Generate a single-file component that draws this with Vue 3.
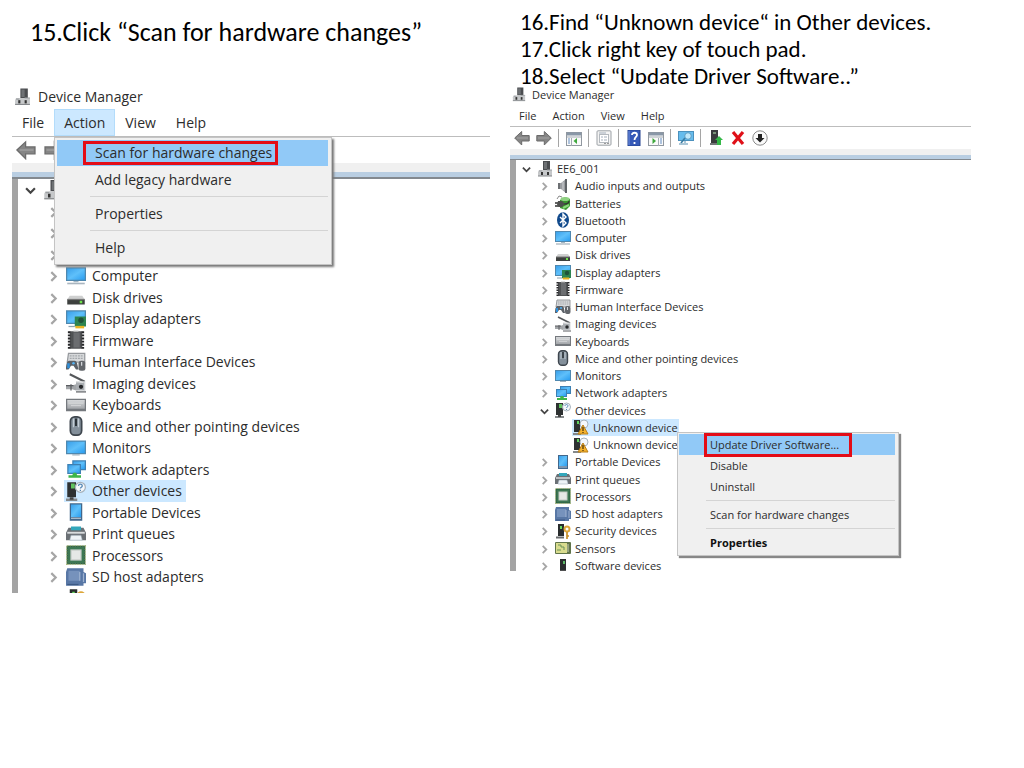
<script setup>
import { ref } from 'vue'

const categories = [
  ['audio', 'Audio inputs and outputs'],
  ['battery', 'Batteries'],
  ['bluetooth', 'Bluetooth'],
  ['computer', 'Computer'],
  ['disk', 'Disk drives'],
  ['display', 'Display adapters'],
  ['firmware', 'Firmware'],
  ['hid', 'Human Interface Devices'],
  ['imaging', 'Imaging devices'],
  ['keyboard', 'Keyboards'],
  ['mouse', 'Mice and other pointing devices'],
  ['monitor', 'Monitors'],
  ['network', 'Network adapters'],
  ['other', 'Other devices'],
  ['portable', 'Portable Devices'],
  ['printer', 'Print queues'],
  ['cpu', 'Processors'],
  ['sd', 'SD host adapters'],
  ['security', 'Security devices'],
  ['sensor', 'Sensors'],
  ['software', 'Software devices']
].map(([icon, label]) => ({ icon, label, level: 1 }))

const root = { icon: 'pc', label: 'EE6_001', level: 0, open: true }

const scanRows = [
  root,
  ...categories.slice(0, 19).map((c) => ({ ...c, selected: c.icon === 'other' }))
]

const updateRows = [root]
for (const c of categories) {
  const open = c.icon === 'other'
  updateRows.push({ ...c, open })
  if (open) {
    updateRows.push({ icon: 'unknown', label: 'Unknown device', level: 2, selected: true })
    updateRows.push({ icon: 'unknown', label: 'Unknown device', level: 2 })
  }
}

const panels = ref([
  {
    id: 'scan',
    steps: ['15.Click “Scan for hardware changes”'],
    activeMenu: 'Action',
    tools: [['back', 'Back'], ['forward', 'Forward']],
    rows: scanRows,
    menu: [
      { label: 'Scan for hardware changes', marked: true },
      { label: 'Add legacy hardware' },
      null,
      { label: 'Properties' },
      null,
      { label: 'Help' }
    ]
  },
  {
    id: 'update',
    steps: [
      '16.Find “Unknown device“ in Other devices.',
      '17.Click right key of touch pad.',
      '18.Select “Update Driver Software..”'
    ],
    activeMenu: '',
    tools: [
      ['back', 'Back'], ['forward', 'Forward'], null,
      ['tree', 'Show or hide console tree'], null,
      ['props', 'Properties'], null,
      ['help', 'Help'], ['action', 'Show or hide action pane'], null,
      ['scan', 'Scan for hardware changes'], null,
      ['update', 'Update driver'], ['remove', 'Uninstall'], ['down', 'Disable']
    ],
    rows: updateRows,
    menu: [
      { label: 'Update Driver Software...', marked: true },
      { label: 'Disable' },
      { label: 'Uninstall' },
      null,
      { label: 'Scan for hardware changes' },
      null,
      { label: 'Properties', bold: true }
    ]
  }
])

const menuNames = ['File', 'Action', 'View', 'Help']
</script>

<template>
  <svg class="sprite" aria-hidden="true">
    <defs>
      <linearGradient id="g-blue" x1="0" y1="0" x2="1" y2="1">
        <stop offset="0" stop-color="#3aa0ea" /><stop offset=".5" stop-color="#5fc0fa" /><stop offset="1" stop-color="#2a9df0" />
      </linearGradient>
      <linearGradient id="g-gray" x1="0" y1="0" x2="0" y2="1">
        <stop offset="0" stop-color="#d6d8da" /><stop offset="1" stop-color="#a3a6aa" />
      </linearGradient>
    </defs>
    <symbol id="pc" viewBox="0 0 16 16">
      <rect x="6" y="0" width="7" height="9" fill="#4b4d50" /><rect x="7" y="1" width="3" height="7" fill="#6e7174" />
      <path d="M2 9h13v6H1v-4z" fill="#c6c8ca" /><path d="M1 15h14" stroke="#84878a" />
      <path d="M2 10h3M10 9h5" stroke="#9c9fa2" /><rect x="4" y="11" width="2" height="3" fill="#333" /><rect x="10" y="11" width="2" height="3" fill="#333" />
    </symbol>
    <symbol id="audio" viewBox="0 0 16 16">
      <path d="M3 5h3l5-4v14l-5-4H3z" fill="#9a9da1" /><path d="M3 5h2v6H3z" fill="#6d7073" />
      <path d="M10 1h2v14h-2z" fill="#606468" /><path d="M8 4v8" stroke="#d0d3d6" />
    </symbol>
    <symbol id="battery" viewBox="0 0 16 16">
      <path d="M5 5l5-3 5 2v7l-4 4-6-2z" fill="#39952f" /><ellipse cx="10" cy="4" rx="4.500" ry="2" fill="#8fd182" />
      <path d="M8 13l6-3" stroke="#8cd87e" stroke-width="2" />
      <path d="M0 8h4M0 11h4M9 9c4 0 5-1 5-3" stroke="#333" stroke-width="1.300" fill="none" />
      <path d="M3 6h4l3 3-3 3H4L2 10z" fill="#4d4f4d" /><path d="M2 4l2-3 3 1" fill="none" stroke="#888" />
    </symbol>
    <symbol id="bluetooth" viewBox="0 0 16 16">
      <ellipse cx="8" cy="8" rx="6" ry="7.700" fill="#114a8c" />
      <path d="M5 5l6 6-3 3V2l3 3-6 6" fill="none" stroke="#fff" stroke-width="1.400" />
    </symbol>
    <symbol id="computer" viewBox="0 0 16 16">
      <rect x="0" y="1" width="16" height="11" fill="#4f88af" /><rect x="1" y="2" width="14" height="9" fill="url(#g-blue)" />
      <path d="M6 12h4v1H6z" fill="#a6b8c4" /><path d="M1 14h14" stroke="#a9b5bf" stroke-width="1.300" />
    </symbol>
    <symbol id="monitor" viewBox="0 0 16 16">
      <rect x="0" y="2" width="16" height="11" fill="#4f88af" /><rect x="1" y="3" width="14" height="9" fill="url(#g-blue)" />
      <path d="M5 13h6v1H5z" fill="#9fb1bd" />
    </symbol>
    <symbol id="disk" viewBox="0 0 16 16">
      <path d="M3 7h10l2 3H1z" fill="#cfd0d0" /><path d="M1 10h14v4H1z" fill="#3d403e" /><path d="M1 10h14" stroke="#777" />
      <rect x="11" y="11" width="2" height="2" fill="#6ee34c" />
    </symbol>
    <symbol id="display" viewBox="0 0 16 16">
      <rect x="0" y="1" width="16" height="11" fill="#4f88af" /><rect x="1" y="2" width="14" height="9" fill="url(#g-blue)" />
      <path d="M2 14h5" stroke="#8fa3af" /><path d="M7 6h9v8H7z" fill="#2d8450" /><circle cx="12" cy="9" r="2.200" fill="#20533a" />
      <path d="M8 14h6v1H8z" fill="#e8b424" stroke="#e8b424" />
    </symbol>
    <symbol id="firmware" viewBox="0 0 16 16">
      <path d="M3 1h10v14H3z" fill="#505254" /><path d="M6 2h5v12H6z" fill="#6b6d70" />
      <path d="M2.500 1v15M13.500 1v15" stroke="#262729" stroke-width="2" stroke-dasharray="1.500 1" /><path d="M6 1h4" stroke="#bbb" />
    </symbol>
    <symbol id="hid" viewBox="0 0 16 16">
      <path d="M2 1h13v7H1z" fill="#d7d9db" stroke="#96999d" /><path d="M3 3h11M3 5h11" stroke="#a4a8ac" stroke-dasharray="1.500 .7" />
      <path d="M0 14c0-5 1-7 3-7h4c2 0 2 3 3 7H8l-2-3H4l-2 3z" fill="#5a6067" /><path d="M1 9h2v4H1z" fill="#2f90dc" />
      <rect x="10" y="7" width="5.500" height="8" rx="2" fill="#62666b" /><path d="M12.500 8v3" stroke="#d3d6da" /><circle cx="6" cy="9" r="1" fill="#55b2f2" />
    </symbol>
    <symbol id="imaging" viewBox="0 0 16 16">
      <path d="M3 1l12 6" stroke="#55585b" stroke-width="1.600" /><path d="M8 7l7 1v7H8z" fill="#aaaeb2" />
      <path d="M0 10h5l3-1v5l-3-1H0z" fill="#a2a5a8" /><path d="M0 10h6M4 9v5M8 15h8" stroke="#5a5d60" />
      <path d="M8 7h7v7H8" fill="none" stroke="#d5d7d9" /><circle cx="12" cy="11" r="1.700" fill="#252729" />
    </symbol>
    <symbol id="keyboard" viewBox="0 0 16 16">
      <rect x="0" y="3" width="16" height="10" fill="#75797e" /><rect x="1" y="4" width="14" height="7" fill="url(#g-gray)" />
      <path d="M2 6.500h12M4 8.500h8" stroke="#dfe1e3" stroke-width=".6" />
    </symbol>
    <symbol id="mouse" viewBox="0 0 16 16">
      <rect x="3.500" y=".7" width="9" height="14.600" rx="3.500" fill="#84909b" stroke="#3e464e" stroke-width="1.400" />
      <path d="M6 2v7M10 2v7" stroke="#c2ccd4" /><path d="M8 2v6" stroke="#262c32" stroke-width="1.500" />
    </symbol>
    <symbol id="network" viewBox="0 0 16 16">
      <rect x="5" y="1" width="11" height="8" fill="#3d80b3" /><rect x="6" y="2" width="9" height="6" fill="url(#g-blue)" />
      <rect x="1" y="4" width="11" height="8" fill="#3d80b3" /><rect x="2" y="5" width="9" height="6" fill="url(#g-blue)" />
      <path d="M6 11h2l1 2h3v2H2v-2h3z" fill="#3fb649" />
    </symbol>
    <symbol id="other" viewBox="0 0 16 16">
      <path d="M1 1h7v12H1z" fill="#2e3132" /><path d="M4 2h3v4H4z" fill="#5fc35e" /><path d="M0 15h9" stroke="#85898b" stroke-width="2" />
      <path d="M3 13h3v2H3z" fill="#444" /><circle cx="11.500" cy="5" r="4" fill="#f5f8fb" stroke="#a7b3bd" />
      <path d="M10 4c0-2 3-2 3 0 0 1-1.500 1-1.500 2M11.500 7v1" fill="none" stroke="#5487b5" />
    </symbol>
    <symbol id="unknown" viewBox="0 0 16 16">
      <path d="M1 1h6v12H1z" fill="#2e3132" /><path d="M4 2h2v3H4z" fill="#5fd35e" /><path d="M0 15h8" stroke="#85898b" stroke-width="2" />
      <circle cx="11" cy="5" r="4" fill="#f5f8fb" stroke="#a7b3bd" /><path d="M10 6l5 9H5z" fill="#f4b22d" stroke="#b97e17" />
      <path d="M10 8v4M10 13v1" stroke="#51380b" stroke-width="1.300" />
    </symbol>
    <symbol id="portable" viewBox="0 0 16 16">
      <rect x="3" y="1" width="10" height="14" fill="#42678b" /><rect x="4" y="2" width="8" height="10" fill="url(#g-blue)" /><path d="M4 13h8" stroke="#b7c7d6" />
    </symbol>
    <symbol id="printer" viewBox="0 0 16 16">
      <path d="M2 3h12l2 4v6h-3l-1-3H4l-1 3H0V7z" fill="#6b7075" /><path d="M4 2h8v3H4z" fill="#33a7bb" />
      <path d="M1 7h14" stroke="#d9dcde" stroke-width="1.500" /><path d="M4 9h8l1 4H3z" fill="#eef3f7" stroke="#93a3ae" stroke-width=".5" />
    </symbol>
    <symbol id="cpu" viewBox="0 0 16 16">
      <rect x="1" y="1" width="14" height="14" fill="#3d7753" stroke="#2b5c3e" /><path d="M1 .5h15M1 15.500h15M.5 1v15M15.500 1v15" stroke="#a9bb80" stroke-dasharray="1 1" />
      <rect x="4" y="4" width="8" height="8" fill="#e6e8e6" stroke="#c5cbc6" />
    </symbol>
    <symbol id="sd" viewBox="0 0 16 16">
      <path d="M1 1h13v3l2 1v8h-2v2H0V4z" fill="#5877a5" /><path d="M2 3h9v8H2z" fill="#7692bc" />
      <path d="M11 4v7M14 5v7" stroke="#9eb2d1" /><path d="M1 14h9" stroke="#3c5983" />
    </symbol>
    <symbol id="security" viewBox="0 0 16 16">
      <path d="M3 1h6v12H3z" fill="#292c2d" /><path d="M5 3h2v3H5z" fill="#63d85d" /><path d="M1 14.500h8" stroke="#686b6d" stroke-width="2" />
      <circle cx="12" cy="6" r="2.500" fill="none" stroke="#dca63a" stroke-width="2" /><path d="M12 9v7M12 13h2" stroke="#c68f29" stroke-width="1.700" />
    </symbol>
    <symbol id="sensor" viewBox="0 0 16 16">
      <rect x="0" y="2" width="16" height="12" rx="1" fill="#60744a" /><rect x="1" y="3" width="11" height="10" fill="#d9dc8e" />
      <path d="M3 5h3v2h3v3M2 10h4" stroke="#6b9258" fill="none" /><path d="M13 4v8" stroke="#c9ceb3" />
    </symbol>
    <symbol id="software" viewBox="0 0 16 16">
      <rect x="5" y="2" width="6" height="12" fill="#2a2d2e" /><path d="M8 4h2v3H8z" fill="#5cb867" /><path d="M5 14h6" stroke="#777" />
    </symbol>

    <symbol id="back" viewBox="0 0 16 16"><path d="M.7 8l7-6.500v4h7.500v5.500H7.700v4z" fill="#858585" stroke="#6b6b6b" /><path d="M3 8h11" stroke="#a4a4a4" /></symbol>
    <symbol id="forward" viewBox="0 0 16 16"><path d="M15.300 8l-7-6.500v4H.8v5.500h7.500v4z" fill="#858585" stroke="#6b6b6b" /><path d="M2 8h11" stroke="#a4a4a4" /></symbol>
    <symbol id="tree" viewBox="0 0 16 16">
      <rect x=".5" y="2.500" width="15" height="13" fill="#fafafa" stroke="#9198a0" /><path d="M1 4h14" stroke="#8997a7" stroke-width="3" /><path d="M1 7h14M5.500 8v8" stroke="#a4acb4" />
      <path d="M2 9h2M2 11h2M2 13h2" stroke="#628cc1" /><path d="M11 8v6L7.500 11z" fill="#3fa83d" />
    </symbol>
    <symbol id="action" viewBox="0 0 16 16">
      <rect x=".5" y="2.500" width="15" height="13" fill="#fafafa" stroke="#9198a0" /><path d="M1 4h14" stroke="#8997a7" stroke-width="3" /><path d="M1 7h14M10.500 8v8" stroke="#a4acb4" />
      <path d="M12 9h2M12 11h2M12 13h2" stroke="#628cc1" /><path d="M4.500 8v6L8 11z" fill="#3fa83d" />
    </symbol>
    <symbol id="props" viewBox="0 0 16 16">
      <rect x="1" y=".8" width="14" height="14.400" rx="1" fill="#f4f4f4" stroke="#9ca1a6" /><rect x="3.500" y="4.500" width="9" height="8" fill="#fff" stroke="#b4b9be" />
      <path d="M3 3h7M5 7h2M8 7h3M5 10h2M8 10h3" stroke="#a3aebb" /><path d="M8 13.500h2M11 13.500h2" stroke="#999" />
    </symbol>
    <symbol id="help" viewBox="0 0 16 16">
      <path d="M2 0h12v16H2z" fill="#3659b8" stroke="#24438f" /><path d="M3 1v14" stroke="#7192df" />
      <path d="M6 5c0-3 5-3 5 0 0 2-2.500 2-2.500 5M8.500 12v2" fill="none" stroke="#fff" stroke-width="1.800" />
    </symbol>
    <symbol id="scan" viewBox="0 0 16 16">
      <rect x="0" y="1" width="16" height="10" fill="#4c91bd" /><rect x="1" y="2" width="14" height="8" fill="#66bced" />
      <circle cx="10" cy="6" r="3.300" fill="#c1e8fa" stroke="#5a9cc4" /><path d="M7 8l-4 5" stroke="#387ca4" stroke-width="1.700" /><path d="M1 14h9M7 11v2" stroke="#8eb4ca" stroke-width="1.500" />
    </symbol>
    <symbol id="update" viewBox="0 0 16 16">
      <path d="M3 0h7v13H3z" fill="#3a3c3d" /><path d="M5 2h3v2H5z" fill="#799478" /><path d="M2 14h8" stroke="#747779" stroke-width="2" /><path d="M11 6l4 4h-2v5H9v-5H7z" fill="#35b848" />
    </symbol>
    <symbol id="remove" viewBox="0 0 16 16"><path d="M3 2l10 12M13 2L3 14" fill="none" stroke="#df1018" stroke-width="3.200" /></symbol>
    <symbol id="down" viewBox="0 0 16 16"><circle cx="8" cy="8" r="7.200" fill="#fafafa" stroke="#8a8a8a" /><path d="M6 4h4v4h2.500L8 12.500 3.500 8H6z" fill="#222" /></symbol>
  </svg>

  <main class="slide">
    <section v-for="p in panels" :key="p.id" class="panel" :class="p.id">
      <div class="steps">
        <p v-for="s in p.steps" :key="s">{{ s }}</p>
      </div>

      <div class="window">
        <header class="title">
          <svg class="app-icon"><use href="#pc" /></svg>
          <span>Device Manager</span>
        </header>
        <nav class="menubar">
          <button v-for="m in menuNames" :key="m" type="button" :class="{ active: m === p.activeMenu }">{{ m }}</button>
        </nav>
        <div class="toolbar">
          <template v-for="(t, i) in p.tools" :key="i">
            <button v-if="t" type="button" :aria-label="t[1]"><svg><use :href="'#' + t[0]" /></svg></button>
            <i v-else></i>
          </template>
        </div>
        <div class="tree-frame">
          <ul class="tree">
            <li v-for="(r, i) in p.rows" :key="i" :class="'level' + r.level">
              <span class="chevron">
                <svg v-if="r.level < 2" viewBox="0 0 10 10">
                  <path v-if="r.open" class="open" d="M1 3l4 4 4-4" />
                  <path v-else d="M3 1l4 4-4 4" />
                </svg>
              </span>
              <span class="node" :class="{ selected: r.selected }">
                <svg class="icon"><use :href="'#' + r.icon" /></svg>
                <span class="label">{{ r.label }}</span>
              </span>
            </li>
          </ul>
        </div>
        <div class="popup" role="menu">
          <template v-for="(m, i) in p.menu" :key="i">
            <button v-if="m" type="button" role="menuitem" :class="{ marked: m.marked, bold: m.bold }">
              <span>{{ m.label }}</span>
            </button>
            <hr v-else />
          </template>
        </div>
      </div>
    </section>
  </main>
</template>

<style>
body {
  margin: 0;
  background: #fff;
}
</style>

<style scoped>
.sprite {
  position: absolute;
  width: 0;
  height: 0;
}
.slide {
  display: grid;
  grid-template-columns: 478fr 461fr;
  gap: 20px;
  align-items: start;
  padding: 0 53px 0 12px;
  color: #000;
}
.panel {
  --ui: 14px;
  --icon: 20px;
  --chev: 11px;
  min-width: 0;
}
.panel.update {
  --ui: 11px;
  --icon: 16px;
  --chev: 9px;
}
.steps {
  box-sizing: border-box;
  height: 84px;
  overflow: hidden;
  padding: 18px 0 0 18px;
  font: 26px/28px Carlito, Lato, sans-serif;
  white-space: nowrap;
}
.update .steps {
  padding: 9px 0 0 10px;
  font-size: 23px;
  line-height: 27px;
}
.steps p {
  margin: 0;
}
.window {
  position: relative;
  font-family: "Open Sans", sans-serif;
  font-size: var(--ui);
  color: #2c2c2c;
  white-space: nowrap;
}
button {
  margin: 0;
  padding: 0;
  border: 0;
  background: none;
  font: inherit;
  color: inherit;
}
svg {
  display: block;
}
.title {
  display: flex;
  align-items: center;
  height: 25px;
  gap: 7px;
  padding-left: 2px;
}
.app-icon {
  width: 17px;
  height: 20px;
}
.update .title {
  height: 21px;
  gap: 6px;
}
.update .app-icon {
  width: 14px;
  height: 15px;
}
.menubar {
  display: flex;
  height: 27px;
  border-bottom: 1px solid #bdbdbd;
}
.menubar button {
  padding: 0 9px;
  border: 1px solid transparent;
}
.menubar .active {
  background: #cce8ff;
  border-color: #b3dcfb;
}
.update .menubar {
  height: 21px;
  padding-left: 1px;
}
.update .menubar button {
  padding: 0 7px;
}
.toolbar {
  display: flex;
  align-items: center;
  gap: 8px;
  height: 26px;
  padding: 0 4px;
}
.toolbar svg {
  width: 20px;
  height: 20px;
}
.toolbar i {
  width: 1px;
  height: 18px;
  margin-right: 1px;
  background: #a5a5a5;
}
.update .toolbar {
  gap: 6px;
  height: 22px;
}
.update .toolbar svg {
  width: 16px;
  height: 16px;
}
.tree-frame {
  box-sizing: border-box;
  height: 430px;
  overflow: hidden;
  border-top: 9px solid #f0f0f0;
}
.update .tree-frame {
  height: 422px;
  border-top-width: 6px;
}
.tree-frame::before {
  content: "";
  display: block;
  height: 5px;
  background: #b9cee2;
  border-bottom: 2px solid #83898f;
}
.update .tree-frame::before {
  height: 4px;
  border-bottom-width: 1px;
}
.tree {
  display: grid;
  grid-auto-rows: 1fr;
  box-sizing: border-box;
  height: 430px;
  margin: 0;
  padding: 0 0 0 3px;
  border-left: 6px solid #a4a4a4;
  list-style: none;
}
.update .tree {
  height: 414px;
  padding-left: 5px;
}
.tree li {
  display: flex;
  align-items: center;
  min-height: 0;
}
.level1 {
  padding-left: 23px;
}
.level2 {
  padding-left: 46px;
}
.update .level1 {
  padding-left: 18px;
}
.update .level2 {
  padding-left: 36px;
}
.chevron {
  width: 18px;
  display: flex;
  justify-content: center;
  padding-top: 2px;
}
.update .chevron {
  width: 10px;
}
.chevron svg {
  width: var(--chev);
  height: var(--chev);
}
.chevron path {
  fill: none;
  stroke: #a6a6a6;
  stroke-width: 2;
}
.chevron .open {
  stroke: #444;
}
.node {
  display: flex;
  align-items: center;
  align-self: stretch;
  gap: 6px;
  margin-left: 2px;
  padding: 0 4px 0 2px;
}
.update .node {
  gap: 4px;
  margin-left: 5px;
  padding: 0 1px;
}
.selected {
  background: #cce8ff;
}
.icon {
  width: var(--icon);
  height: var(--icon);
}
.popup {
  position: absolute;
  top: 53px;
  left: 42px;
  width: 271px;
  padding: 2px 3px 4px 2px;
  border: 1px solid #c4c4c4;
  background: #f0f0f0;
  box-shadow: 2px 2px 2px #777;
}
.popup button {
  display: flex;
  align-items: center;
  width: 100%;
  height: 26px;
  padding-left: 26px;
}
.popup span {
  padding: 0 3px 0 9px;
  border: 3px solid transparent;
}
.popup .marked {
  background: #91c9f7;
}
.popup .marked span {
  border-color: #e30c17;
  line-height: 18px;
}
.popup .bold {
  font-weight: 700;
  color: #111;
}
.popup hr {
  height: 1px;
  margin: 4px 0 3px 33px;
  border: 0;
  background: #d4d4d4;
}
.update .popup {
  top: 348px;
  left: 167px;
  width: 216px;
  padding: 1px 3px 2px 1px;
  box-shadow: 2px 2px 1px #888;
}
.update .popup button {
  height: 21px;
  padding-left: 25px;
}
.update .popup span {
  padding: 0 10px 0 3px;
}
.update .popup hr {
  margin: 3px 0 3px 27px;
}
</style>
